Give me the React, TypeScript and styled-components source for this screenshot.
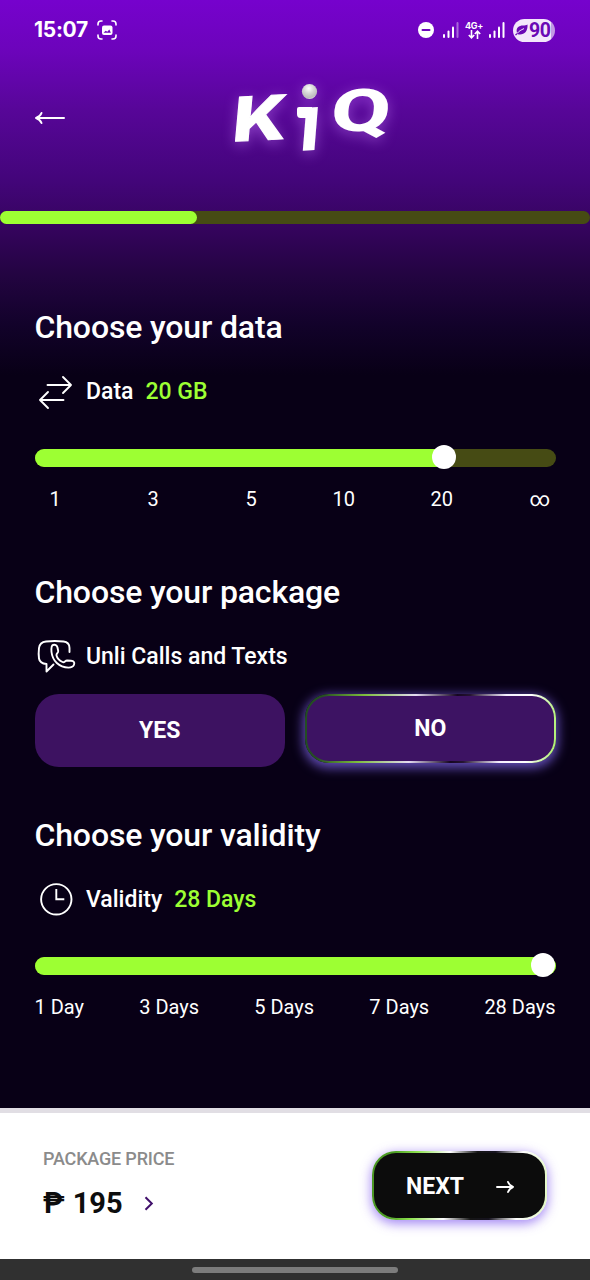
import React from "react";
import styled, { createGlobalStyle } from "styled-components";

const GlobalStyle = createGlobalStyle`
  * { box-sizing: border-box; }
  body { margin: 0; background: #080016; }
`;

const LIME = "#9dff33";

const Screen = styled.div`
  width: 590px;
  height: 1280px;
  display: flex;
  flex-direction: column;
  overflow: hidden;
  font-family: Roboto, "Liberation Sans", sans-serif;
  color: #fff;
  background: linear-gradient(180deg, #7602cd 0, #6c04bb 50px, #570698 110px, #43057a 180px, #36045f 225px, #230441 275px, #12022a 325px, #080016 375px);
`;

const StatusBar = styled.div`
  height: 60px;
  padding: 0 35px 0 34px;
  display: flex;
  align-items: center;
  justify-content: space-between;
`;

const StatusGroup = styled.div<{ $gap: number }>`
  display: flex;
  align-items: center;
  gap: ${(p) => p.$gap}px;
`;

const Clock = styled.span`
  font: 700 21px/24px Inter, sans-serif;
  letter-spacing: -0.3px;
`;

const Network = styled.div`
  display: flex;
  flex-direction: column;
  align-items: center;
  width: 18px;
  font: 700 9px/9px Inter, sans-serif;
  letter-spacing: -0.3px;
  white-space: nowrap;
`;

const Battery = styled.div`
  display: flex;
  align-items: center;
  gap: 1px;
  width: 42px;
  height: 23px;
  margin-left: 2px;
  padding-left: 2px;
  border-radius: 12px;
  background: linear-gradient(90deg, #f3e6fb 0 38px, #c29ae4 38px);
  color: #6a08b5;
  font: 700 19.5px/23px Roboto, sans-serif;
  letter-spacing: -0.4px;
`;

const Header = styled.header`
  height: 151px;
  padding: 10px 0 0 34px;
  display: flex;
  align-items: flex-start;
`;

const BackIcon = styled.svg`
  margin-top: 39px;
`;

const Logo = styled.svg`
  margin-left: 149px;
  overflow: visible;
  filter: drop-shadow(0 3px 7px rgba(205, 130, 255, 0.45));
  font-family: Inter, sans-serif;
  font-weight: 800;
`;

const Progress = styled.div`
  height: 13px;
  border-radius: 7px;
  background: #464b14;
`;

const ProgressFill = styled.div`
  width: 197px;
  height: 13px;
  border-radius: 7px;
  background: ${LIME};
`;

const Main = styled.main`
  flex: 1;
  padding: 0 34.5px;
  display: flex;
  flex-direction: column;
`;

const Section = styled.section<{ $top: number }>`
  margin-top: ${(p) => p.$top}px;
`;

const Heading = styled.h2`
  margin: 0;
  font-weight: 500;
  font-size: 32px;
  line-height: 40px;
  letter-spacing: -0.15px;
  white-space: nowrap;
`;

const Row = styled.div`
  display: flex;
  align-items: center;
  height: 40px;
  margin-top: 24px;
  font-weight: 500;
  font-size: 23px;
  white-space: nowrap;
`;

const RowIcon = styled.svg`
  width: 40px;
  height: 40px;
  margin-right: 11.5px;
  flex: none;
  overflow: visible;
`;

const Value = styled.span`
  margin-left: 12px;
  color: ${LIME};
`;

const Slider = styled.div`
  position: relative;
  height: 18px;
  margin-top: 38px;
  border-radius: 9px;
  background: #464b14;
`;

const SliderFill = styled.div`
  height: 18px;
  border-radius: 9px;
  background: ${LIME};
`;

const Thumb = styled.div`
  position: absolute;
  top: -4px;
  width: 24px;
  height: 24px;
  margin-left: -12px;
  border-radius: 50%;
  background: #fff;
`;

const DataLabels = styled.div`
  display: grid;
  grid-template-columns: 98px 98px 87px 98px 99px auto;
  margin: 18px 0 0 15px;
  font-size: 20px;
  line-height: 28px;
`;

const DayLabels = styled.div`
  display: flex;
  justify-content: space-between;
  margin-top: 18px;
  font-size: 20px;
  line-height: 28px;
`;

const Choices = styled.div`
  display: flex;
  gap: 20px;
  height: 73px;
  margin-top: 18px;
`;

const Choice = styled.button<{ $selected?: boolean }>`
  width: 250.5px;
  height: ${(p) => (p.$selected ? 69 : 73)}px;
  padding: 0;
  border: ${(p) => (p.$selected ? "2px solid transparent" : "0")};
  border-radius: 24px;
  color: #fff;
  font: 700 23px Roboto, sans-serif;
  background: ${(p) =>
    p.$selected
      ? `linear-gradient(#3d1363, #3d1363) padding-box,
         linear-gradient(96deg, #234f22 0%, #264f22 7%, #7dbd3c 23%, #e5dcf2 43%, #160622 59%, #251432 64%, #f5efff 78%, #fff 88%, #a8ee65 100%) border-box`
      : "#3d1261"};
  box-shadow: ${(p) => (p.$selected ? "0 3px 11px 2px rgba(112, 88, 205, 0.88)" : "none")};
`;

const Footer = styled.footer`
  height: 151px;
  padding: 0 43px;
  border-top: 5px solid #e1dee4;
  display: flex;
  align-items: flex-start;
  justify-content: space-between;
  color: #0d0d0d;
  background: #fff;
`;

const PriceBlock = styled.div`
  margin-top: 34px;
`;

const PriceLabel = styled.div`
  color: #8b8b8b;
  font-weight: 500;
  font-size: 18px;
  line-height: 24px;
  letter-spacing: -0.18px;
`;

const Price = styled.div`
  display: flex;
  align-items: center;
  height: 40px;
  margin-top: 12px;
  font-weight: 700;
  font-size: 29px;
`;

const Peso = styled.span`
  margin-right: 8px;
`;

const Chevron = styled.svg`
  margin-left: 21px;
`;

const NextButton = styled.button`
  width: 175px;
  height: 69px;
  margin-top: 38px;
  padding: 2px 30px 0 32px;
  display: flex;
  align-items: center;
  justify-content: space-between;
  border: 2px solid transparent;
  border-radius: 24px;
  color: #fff;
  font: 700 23px Roboto, sans-serif;
  background: linear-gradient(#0c0c0c, #0c0c0c) padding-box,
    linear-gradient(96deg, #4b9424 0%, #4c9e24 12%, #8ee24f 25%, #fff 43%, #151515 58%, #16131f 68%, #fff 83%, #e0f7c0 100%) border-box;
  box-shadow: 0 3px 11px 1px rgba(133, 96, 240, 0.72);
`;

const NavBar = styled.div`
  height: 21px;
  display: flex;
  justify-content: center;
  align-items: center;
  background: #303030;
`;

const NavHandle = styled.div`
  width: 206px;
  height: 6px;
  border-radius: 3px;
  background: #7c7c7c;
`;

const DoNotDisturb = styled.svg`
  margin-right: 3px;
`;

const Signal = ({ weak }: { weak?: boolean }) => (
  <svg width="16" height="16" viewBox="0 0 16 16" fill="#fff">
    <rect x="0" y="12" width="2" height="4" rx="1" />
    <rect x="4.5" y="8.5" width="2" height="7.5" rx="1" />
    <rect x="9" y="4.5" width="2" height="11.5" rx="1" />
    <rect x="13.5" y="0" width="2" height="16" rx="1" opacity={weak ? 0.4 : 1} />
  </svg>
);

const RangeSlider = ({ percent, thumb }: { percent: number; thumb: number }) => (
  <Slider>
    <SliderFill style={{ width: `${percent}%` }} />
    <Thumb style={{ left: `${thumb}%` }} />
  </Slider>
);

export default function App() {
  return (
    <>
      <GlobalStyle />
      <Screen>
        <StatusBar>
          <StatusGroup $gap={9}>
            <Clock>15:07</Clock>
            <svg width="20" height="20" viewBox="0 0 20 20" fill="none" stroke="#fff" strokeWidth="1.6" strokeLinecap="round">
              <path d="M1 5V4a3 3 0 0 1 3-3h1M15 1h1a3 3 0 0 1 3 3v1M19 15v1a3 3 0 0 1-3 3h-1M5 19H4a3 3 0 0 1-3-3v-1" />
              <rect x="5" y="5.500" width="10.500" height="9.500" rx="2" fill="#fff" stroke="none" />
              <path d="M6.5 12.7l2.2-2 1.6 1 2-2.2 1.600 3.200z" fill="#6d05bd" stroke="none" />
            </svg>
          </StatusGroup>
          <StatusGroup $gap={6}>
            <DoNotDisturb width="16" height="16" viewBox="0 0 16 16">
              <circle cx="8" cy="8" r="8" fill="#fff" />
              <rect x="3.5" y="7" width="9" height="2" rx="1" fill="#6e05bd" />
            </DoNotDisturb>
            <Signal weak />
            <Network>
              4G+
              <svg width="13" height="9" viewBox="0 0 13 9" fill="none" stroke="#fff" strokeWidth="1.6">
                <path d="M3.5 0v7.5M.8 5l2.7 2.8L6.2 5M9.5 9V1.5M6.8 4l2.7-2.8L12.2 4" />
              </svg>
            </Network>
            <Signal />
            <Battery>
              <svg width="13" height="12" viewBox="0 0 13 12">
                <path d="M12.500.500C13 7 9.700 10.500 5 10.500c-1 0-1.800-.2-2.400-.6L1 11.500 0 10.700l2-2C.500 4 4 1.500 8 1.500c2 0 3.200-.3 4.500-1z" fill="#6a08b5" />
                <path d="M2 9.500C4 7 6 6 9 4.600" stroke="#f3e6fb" fill="none" />
              </svg>
              90
            </Battery>
          </StatusGroup>
        </StatusBar>

        <Header>
          <BackIcon width="32" height="18" viewBox="0 0 32 18" fill="none" stroke="#fff" strokeWidth="2" strokeLinecap="round" strokeLinejoin="round">
            <path d="M2 9h28M7.500 4C6.500 6.500 5 8 2 9c3 1 4.500 2.500 5.500 5" />
          </BackIcon>
          <Logo width="190" height="95" viewBox="0 0 190 95" fill="#fff">
            <defs>
              <radialGradient id="bead" cx="0.45" cy="0.3" r="0.7">
                <stop offset="0" stopColor="#fff" />
                <stop offset="0.5" stopColor="#d4d4d4" />
                <stop offset="0.85" stopColor="#bdbdbd" />
                <stop offset="1" stopColor="#ddd" />
              </radialGradient>
            </defs>
            <text transform="matrix(1.18 -0.06 -0.09 1 16.500 71.500)" fontSize="61" stroke="#fff" strokeWidth="1">K</text>
            <text transform="matrix(0.86 -0.05 -0.08 1 84 81)" fontSize="79">ı</text>
            <path d="M84 37h13v11H85.500q-3.500 0-3.500-4V39q0-2 2-2z" />
            <text transform="matrix(1.47 -0.05 -0.08 1 114.500 62)" fontSize="59" fontFamily="Roboto, sans-serif" fontWeight="800">Q</text>
            <circle cx="94.500" cy="21.500" r="7.600" fill="url(#bead)" />
          </Logo>
        </Header>

        <Progress>
          <ProgressFill />
        </Progress>

        <Main>
          <Section $top={83}>
            <Heading>Choose your data</Heading>
            <Row>
              <RowIcon viewBox="0 0 40 40" fill="none" stroke="#fff" strokeWidth="1.900" strokeLinecap="round" strokeLinejoin="round">
                <path d="M12.500 14H36M28 6l8 8-8 8M28.500 29H5M13 21l-8 8 8 8" />
              </RowIcon>
              Data<Value>20 GB</Value>
            </Row>
            <RangeSlider percent={80} thumb={78.6} />
            <DataLabels>
              <span>1</span>
              <span>3</span>
              <span>5</span>
              <span>10</span>
              <span>20</span>
              <span>∞</span>
            </DataLabels>
          </Section>

          <Section $top={59}>
            <Heading>Choose your package</Heading>
            <Row>
              <RowIcon viewBox="0 0 40 40" fill="none" stroke="#fff" strokeWidth="1.900" strokeLinecap="round" strokeLinejoin="round">
                <path d="M34.500 16V12c0-4-2-6-6-6.500-6-.7-11.500-.7-17.500 0-4 .5-6.500 2.500-7 6.500-.5 4-.5 7 0 10.500.5 3.500 2.500 5 7.500 5.500v7.500l7-7" />
                <path d="M18 9c2-.7 4 0 4.500 2.500l.7 3.500c.3 2-2.200 2.500-1.700 4.500.7 3 3 5 6 6.500 2 1 2.500-1.500 4.500-1.500l4 .3c3 .2 3.800 1.700 3 4-.8 2.200-3 2.800-5.500 2.800-9.500-.3-16-6.700-17-15.600-.3-3.500-.5-6.300 1.500-7z" />
              </RowIcon>
              Unli Calls and Texts
            </Row>
            <Choices>
              <Choice>YES</Choice>
              <Choice $selected>NO</Choice>
            </Choices>
          </Section>

          <Section $top={48}>
            <Heading>Choose your validity</Heading>
            <Row>
              <RowIcon viewBox="0 0 40 40" fill="none" stroke="#fff" strokeWidth="1.900">
                <circle cx="21.300" cy="20.300" r="15.200" />
                <path d="M21.300 10v10.300h8" />
              </RowIcon>
              Validity<Value>28 Days</Value>
            </Row>
            <RangeSlider percent={100} thumb={97.6} />
            <DayLabels>
              <span>1 Day</span>
              <span>3 Days</span>
              <span>5 Days</span>
              <span>7 Days</span>
              <span>28 Days</span>
            </DayLabels>
          </Section>
        </Main>

        <Footer>
          <PriceBlock>
            <PriceLabel>PACKAGE PRICE</PriceLabel>
            <Price>
              <Peso>₱</Peso>195
              <Chevron width="10" height="15" viewBox="0 0 10 15" fill="none" stroke="#41106b" strokeWidth="2">
                <path d="M1.500 1.200l6.300 6.300-6.300 6.300" />
              </Chevron>
            </Price>
          </PriceBlock>
          <NextButton>
            NEXT
            <svg width="20" height="16" viewBox="0 0 20 16" fill="none" stroke="#fff" strokeWidth="1.900" strokeLinejoin="round" strokeLinecap="round">
              <path d="M2 8h16M13 3c1 2.500 2.500 4 5 5-2.500 1-4 2.500-5 5" />
            </svg>
          </NextButton>
        </Footer>
        <NavBar>
          <NavHandle />
        </NavBar>
      </Screen>
    </>
  );
}
